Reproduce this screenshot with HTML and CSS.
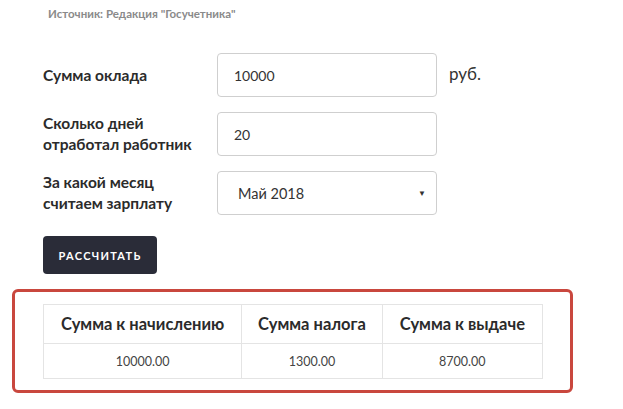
FILE: index.html
```html
<!DOCTYPE html>
<html lang="ru">
<head>
<meta charset="utf-8">
<link rel="stylesheet" href="styles.css">
</head>
<body>
<div class="source">Источник: Редакция "Госучетника"</div>
<form class="calc">
  <div class="row">
    <label class="label">Сумма оклада</label>
    <div class="field">10000</div>
    <span class="unit">руб.</span>
  </div>
  <div class="row">
    <label class="label">Сколько дней<br>отработал работник</label>
    <div class="field">20</div>
  </div>
  <div class="row">
    <label class="label">За какой месяц<br>считаем зарплату</label>
    <div class="field select"><span>Май 2018</span><span class="arrow">▼</span></div>
  </div>
  <div class="btn">РАССЧИТАТЬ</div>
</form>
<div class="result">
  <table class="tbl">
    <tr>
      <th class="c1">Сумма к начислению</th>
      <th class="c2">Сумма налога</th>
      <th class="c3">Сумма к выдаче</th>
    </tr>
    <tr>
      <td>10000.00</td>
      <td>1300.00</td>
      <td>8700.00</td>
    </tr>
  </table>
</div>
</body>
</html>
```
FILE: styles.css
```css
html, body { margin: 0; padding: 0; background: #fff; }
body {
  font-family: Lato, "Noto Sans", sans-serif;
  color: #2b2b2b;
  width: 623px;
  height: 409px;
  overflow: hidden;
}
.source {
  font-size: 11.5px;
  font-weight: 700;
  color: #8a8a8a;
  padding: 6px 0 0 48px;
  height: 16px;
  line-height: 16px;
}
.calc {
  margin: 31px 0 0 43px;
  display: flex;
  flex-direction: column;
  gap: 15px;
}
.row {
  display: flex;
  align-items: center;
  height: 44px;
}
.label {
  width: 174px;
  font-size: 15.5px;
  font-weight: 700;
  line-height: 21px;
  color: #2b2b2b;
}
.field {
  box-sizing: border-box;
  width: 220px;
  height: 44px;
  border: 1px solid #cfcfcf;
  border-radius: 4px;
  padding: 0 16px;
  display: flex;
  align-items: center;
  font-size: 14px;
  color: #333;
}
.select {
  padding: 0 10px 0 20px;
  justify-content: space-between;
  font-size: 14.5px;
}
.arrow { font-size: 8px; color: #333; }
.unit {
  margin-left: 12px;
  font-size: 17px;
  color: #333;
  margin-bottom: 3px;
}
.btn {
  margin-top: 6px;
  width: 114px;
  height: 38px;
  box-sizing: border-box;
  background: #2a2c38;
  border-radius: 4px;
  color: #fff;
  font-size: 11px;
  font-weight: 700;
  letter-spacing: 1.3px;
  display: flex;
  align-items: center;
  justify-content: center;
}
.result {
  margin: 15px 0 0 12px;
  width: 561px;
  height: 104px;
  box-sizing: border-box;
  border: 3px solid #c9473e;
  border-radius: 6px;
  padding: 12px 0 0 28px;
}
.tbl {
  border-collapse: collapse;
  width: 500px;
}
.tbl th, .tbl td {
  border: 1px solid #e4e4e4;
  text-align: center;
  padding: 0;
}
.tbl th {
  height: 38px;
  font-size: 16.5px;
  font-weight: 700;
  color: #2b2b2b;
}
.tbl td {
  height: 34px;
  font-size: 12.5px;
  color: #444;
}
.c1 { width: 198px; }
.c2 { width: 140px; }
.c3 { width: 160px; }
```
